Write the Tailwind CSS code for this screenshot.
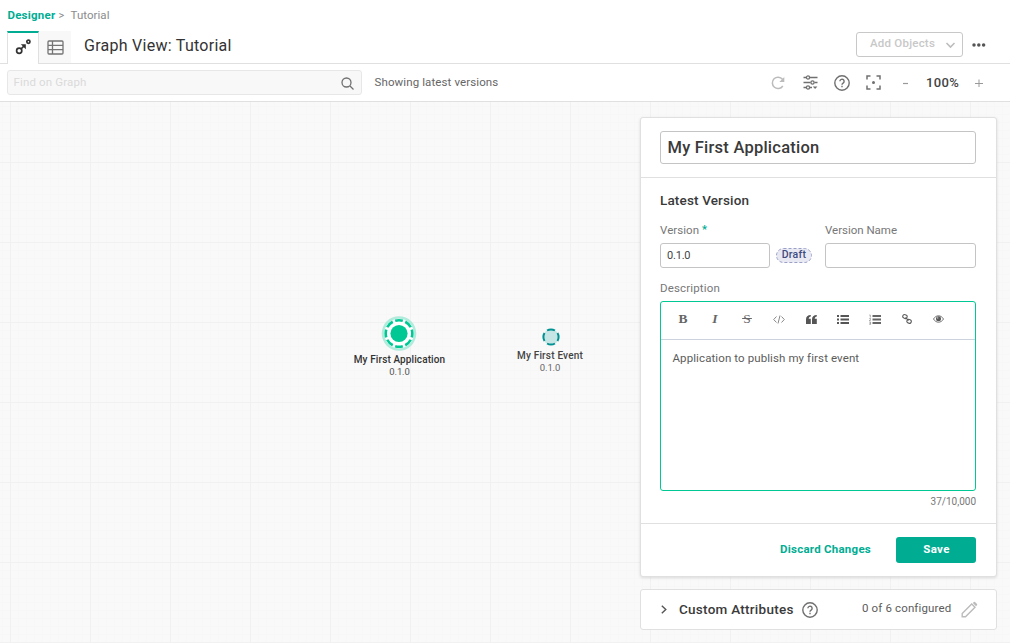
<!DOCTYPE html>
<html lang="en">
<head>
<meta charset="utf-8">
<title>Graph View: Tutorial</title>
<script src="https://cdn.jsdelivr.net/npm/@tailwindcss/browser@4"></script>
</head>
<body class="h-[643px] w-[1010px] overflow-hidden bg-white font-[Roboto,sans-serif] text-[11.5px] text-[#666] whitespace-nowrap">
<div class="flex h-full flex-col">
  <header class="flex h-16 shrink-0 flex-col border-b border-[#e0e0e0]">
    <nav class="flex h-[31px] items-center pl-[7.5px]">
      <a class="w-[51px] font-bold tracking-[0.22px] text-[#00ad93]">Designer</a>
      <span class="w-[12px] pt-px text-[11px] text-[#888]">&gt;</span>
      <span class="tracking-[0.05px] text-[#8c8c8c]">Tutorial</span>
    </nav>
    <div class="flex h-8 pl-[7px]">
      <div class="relative -mb-px flex h-[33px] w-8 items-center justify-center border-x border-t-2 border-x-[#e0e0e0] border-t-[#00ad93] bg-white">
        <svg class="mt-[-3px] size-4" viewBox="0 0 16 16" fill="none" stroke="#333" stroke-width="1.7"><circle cx="4.2" cy="11.8" r="2.6"/><circle cx="13.4" cy="2.800" r="1.6"/><path d="M6 10 9.500 6.500"/><path d="M5.800 5.300h5v5Z" fill="#333" stroke="none"/></svg>
      </div>
      <div class="flex w-8 items-center justify-center bg-[#f8f8f8]">
        <svg class="h-[15px] w-[17px]" viewBox="0 0 17 15" fill="none" stroke="#737373" stroke-width="1.3"><rect x="1" y="1" width="15" height="13" rx="1"/><path d="M1 5.300h15M1 9.700h15M5.500 1v13"/></svg>
      </div>
      <h1 class="ml-[13px] flex h-[30px] flex-1 items-center text-[16px] tracking-[0.27px] text-[#333]">Graph View: Tutorial</h1>
      <button class="mt-px flex h-[25px] w-[107px] items-center rounded-[3px] border border-[#c8c8c8] pl-[13px] font-medium text-[#c8c8c8]">
        <span class="-mt-0.5 w-[75px] text-left tracking-[0.22px]">Add Objects</span>
        <svg class="mt-0.5 h-[7px] w-[11px]" viewBox="0 0 11 7" fill="none" stroke="#bdbdbd" stroke-width="1.600"><path d="m1.500 1 4 4 4-4"/></svg>
      </button>
      <svg class="mt-3 mr-[24px] ml-[9px] h-1 w-[14px]" viewBox="0 0 14 4" fill="#555"><circle cx="2" cy="2" r="1.750"/><circle cx="6.800" cy="2" r="1.750"/><circle cx="11.600" cy="2" r="1.750"/></svg>
    </div>
  </header>

  <section class="flex h-[38px] shrink-0 items-center border-b border-[#e0e0e0] pl-[7px]">
    <div class="flex h-[25px] w-[355px] items-center justify-between rounded-[3px] border border-[#e7e7e7] bg-[#f8f8f8] pr-[7.5px] pl-[5.5px]">
      <span class="pt-px tracking-[0.14px] text-[#dadada]">Find on Graph</span>
      <svg class="mt-px size-[13px]" viewBox="0 0 13 13" fill="none" stroke="#707070" stroke-width="1.300"><circle cx="5.500" cy="5.500" r="4.500"/><path d="m9 9 3.500 3.500"/></svg>
    </div>
    <span class="ml-[12.5px] flex-1 tracking-[0.11px]">Showing latest versions</span>
    <svg class="mr-[18px] size-[14px]" viewBox="0 0 14 14" fill="none" stroke="#bbb" stroke-width="1.500"><path d="M11.800 10A5.700 5.700 0 1 1 11.500 3.300"/><path d="M13.300 1v5H8.300Z" fill="#bbb" stroke="none"/></svg>
    <svg class="mr-[16px] h-[15px] w-[15px]" viewBox="0 0 15 15" fill="none" stroke="#707070" stroke-width="1.300"><path d="M.5 2.500h3M7 2.500h7.500M.5 7.500h7M11.500 7.500h3M.5 12.500h3M7 12.500h2"/><circle cx="5" cy="2.500" r="1.600"/><circle cx="9.500" cy="7.500" r="1.600"/><circle cx="5" cy="12.500" r="1.600"/><path d="M9.800 11.500h4.600l-2.300 2.500Z" fill="#707070" stroke="none"/></svg>
    <svg class="mr-4 size-4" viewBox="0 0 16 16" fill="none" stroke="#707070" stroke-width="1.400"><circle cx="8" cy="8" r="7.200"/><path d="M5.900 6.300a2.100 2.100 0 1 1 3.200 1.800C8.300 8.600 8 8.900 8 9.700M8 10.800v1.500"/></svg>
    <svg class="mr-[22px] size-[15px]" viewBox="0 0 15 15" fill="none" stroke="#707070" stroke-width="1.500"><path d="M1 4.500V1h3.500M10.500 1H14v3.500M14 10.500V14h-3.500M4.500 14H1v-3.500"/><circle cx="7.500" cy="7.500" r="1.500" fill="#707070" stroke="none"/></svg>
    <svg class="mr-[18px] h-[7px] w-[5px]" viewBox="0 0 5 7" stroke="#999" stroke-width="1.2"><path d="M0 4.500h5"/></svg>
    <span class="w-[49px] text-[13px] font-medium tracking-[0.32px] text-[#444]">100%</span>
    <svg class="mr-[27px] size-[8px]" viewBox="0 0 8 8" stroke="#999" stroke-width="1"><path d="M0 4.500h8M4 .5v8"/></svg>
  </section>

  <main class="relative flex-1 overflow-hidden bg-[#f9f9f9]">
    <svg class="absolute inset-0 h-full w-full" shape-rendering="crispEdges">
      <defs>
        <pattern id="minor" x="2" y="4" width="8" height="8" patternUnits="userSpaceOnUse"><path d="M.5 0v8M0 .5h8" stroke="#f7f7f7"/></pattern>
        <pattern id="major" x="10" y="60" width="80" height="80" patternUnits="userSpaceOnUse"><path d="M.5 0v80M0 .5h80" stroke="#f1f1f1"/></pattern>
      </defs>
      <rect width="100%" height="100%" fill="url(#minor)"/><rect width="100%" height="100%" fill="url(#major)"/>
    </svg>

    <div class="absolute top-[213px] left-[349px] flex w-[101px] flex-col items-center">
      <svg class="mr-px size-[36px]" viewBox="0 0 36 36"><circle cx="18" cy="18.500" r="17.300" fill="#b0ebdc"/><circle cx="18" cy="18.500" r="14.700" fill="#fff"/><circle cx="18" cy="18.500" r="13.300" fill="none" stroke="#00c895" stroke-width="2.600" pathLength="80" stroke-dasharray="7.500 2.500" stroke-dashoffset="3.750"/><circle cx="18" cy="18.500" r="8.600" fill="#00c895"/></svg>
      <span class="mt-[2px] text-[10px] leading-[14px] font-medium tracking-[0.11px] text-[#333]">My First Application</span>
      <span class="text-[9.500px] leading-[10px] tracking-[-0.15px] text-[#555]">0.1.0</span>
    </div>
    <div class="absolute top-[226px] left-[505px] flex w-[90px] flex-col items-center">
      <svg class="ml-px size-[18px]" viewBox="0 0 18 18"><circle cx="9" cy="9" r="7.800" fill="#c6e6e6"/><circle cx="9" cy="9" r="7.600" fill="none" stroke="#009193" stroke-width="2" pathLength="80" stroke-dasharray="14 6" stroke-dashoffset="7"/></svg>
      <span class="mt-[3px] text-[10px] leading-[14px] font-medium tracking-[0.19px] text-[#444]">My First Event</span>
      <span class="text-[9.500px] leading-[10px] tracking-[-0.15px] text-[#666]">0.1.0</span>
    </div>

    <aside class="absolute top-[15px] left-[640px] flex w-[357px] flex-col gap-3">
      <div class="h-[460px] rounded-[3px] border border-[#e0e0e0] bg-white shadow-[0_1px_3px_rgba(0,0,0,0.12)]">
        <div class="h-[60px] border-b border-[#e0e0e0] px-[19px] pt-[13px]">
          <div class="flex h-[33px] w-[316px] items-center rounded-[3px] border border-[#c4c4c4] pt-0.5 pl-[6.500px] text-[16.500px] font-medium tracking-[0.23px] text-[#3a3a3a]">My First Application</div>
        </div>
        <div class="flex h-[346px] flex-col border-b border-[#e0e0e0] px-[19px] pt-[13px]">
          <h2 class="h-[30px] text-[13.500px] leading-[18px] font-medium tracking-[0.15px] text-[#3a3a3a]">Latest Version</h2>
          <div class="flex">
            <div class="w-[116px]">
              <div class="flex h-[22px] items-start leading-[18px] tracking-[0.05px] text-[#777]">Version<span class="ml-[3px] text-[11px] font-bold text-[#00ad93]">*</span></div>
              <div class="flex h-[25px] w-[110px] items-center rounded-[3px] border border-[#c4c4c4] pt-px text-[11px] tracking-[-0.2px] text-[#444]"><span class="pl-[6px]">0.1.0</span></div>
            </div>
            <div class="relative mt-[27px] mr-[13px] h-[15px] w-9 text-center text-[10.500px] leading-[14px] font-medium tracking-[0.3px] text-[#3f4a80]">
              <svg class="absolute inset-0 h-[15px] w-9" fill="#e8e9f3" stroke="#9aa0c8"><rect x=".5" y=".5" width="35" height="14" rx="7" stroke-dasharray="3 2"/></svg>
              <span class="relative">Draft</span>
            </div>
            <div>
              <div class="h-[22px] leading-[18px] tracking-[-0.02px] text-[#777]">Version Name</div>
              <div class="h-[25px] w-[151px] rounded-[3px] border border-[#c4c4c4]"></div>
            </div>
          </div>
          <div class="mt-[11px] h-[22px] leading-[18px] tracking-[0.16px] text-[#777]">Description</div>
          <div class="h-[190px] w-[316px] rounded-[3px] border border-[#00c895]">
            <div class="flex h-[38px] items-center border-b border-[#ccd3de] pb-[3px] pl-[6px] font-[Liberation_Serif,serif] text-[13.5px] text-[#666]">
              <span class="w-8 text-center font-bold">B</span>
              <span class="w-8 text-center font-bold italic">I</span>
              <span class="flex w-8 justify-center"><span class="w-3 text-center line-through">&#8202;S&#8202;</span></span>
              <span class="flex w-8 justify-center"><svg class="h-[9px] w-3" viewBox="0 0 12 9" fill="none" stroke="#888"><path d="M3.500 1.500.7 4.500l2.800 3M8.500 1.500l2.800 3-2.800 3M7 .5l-2 8"/></svg></span>
              <span class="flex w-8 justify-center"><svg class="h-[9px] w-[11px]" viewBox="0 0 11 9" fill="#555"><path d="M4.800 0v1.400C3.500 1.500 2.700 2.300 2.700 3.800H4.800V9H0V4.500C0 1.700 1.700 0 4.800 0ZM10.800 0v1.400C9.500 1.500 8.700 2.300 8.700 3.800H10.800V9H6V4.500C6 1.700 7.700 0 10.800 0Z"/></svg></span>
              <span class="flex w-8 justify-center"><svg class="h-[9px] w-3" viewBox="0 0 12 9" fill="#555"><path d="M0 0h2v2H0zM0 3.500h2v2H0zM0 7h2v2H0zM3.500 0H12v2H3.500zM3.500 3.500H12v2H3.500zM3.500 7H12v2H3.500z"/></svg></span>
              <span class="flex w-8 justify-center"><svg class="h-[11px] w-3" viewBox="0 0 12 11"><path d="M3.500 1H12v2H3.500zM3.500 4.500H12v2H3.500zM3.500 8H12v2H3.500z" fill="#666"/><path d="M.3 1h1v2.500M.3 4.500h1.200v1L.3 6.500h1.400M.3 8h1.300v2.400H.3M.3 9.200h1.300" fill="none" stroke="#888" stroke-width=".7"/></svg></span>
              <span class="flex w-8 justify-center"><svg class="size-[10px]" viewBox="0 0 10 10" fill="none" stroke="#5c5c5c" stroke-width="1.100"><rect x=".6" y=".8" width="4.400" height="3.600" rx="1.700" transform="rotate(20 3 3)"/><rect x="5" y="5.500" width="4.400" height="3.600" rx="1.700" transform="rotate(20 7 7)"/><path d="m3.500 3.500 3 3"/></svg></span>
              <span class="flex w-8 justify-center pr-px"><svg class="h-2 w-[11px]" viewBox="0 0 11 8"><path d="M.5 4C3-.3 8-.3 10.500 4 8 8.300 3 8.300.5 4Z" fill="none" stroke="#666" stroke-width=".9"/><circle cx="5.500" cy="3.700" r="2.500" fill="#555"/><circle cx="4.700" cy="2.900" r=".7" fill="#ddd"/></svg></span>
            </div>
            <p class="pt-[9px] pl-[11.500px] leading-[18px] tracking-[0.1px] text-[#5c5c5c]">Application to publish my first event</p>
          </div>
          <div class="mt-[3px] pr-px text-right text-[10px] leading-[16px] text-[#777]">37/10,000</div>
        </div>
        <div class="flex h-[52px] items-center justify-end pr-5 font-bold">
          <a class="mr-[25px] tracking-[0.25px] text-[#00ad93]">Discard Changes</a>
          <button class="h-[26px] w-20 rounded-[3px] bg-[#00ad93] pl-px tracking-[0.3px] text-white">Save</button>
        </div>
      </div>
      <div class="flex h-[41px] items-center rounded-[3px] border border-[#e0e0e0] bg-white pl-5">
        <svg class="mr-[12px] h-[9px] w-[6px]" viewBox="0 0 6 9" fill="none" stroke="#555" stroke-width="1.400"><path d="m.8.700 4 3.800-4 3.800"/></svg>
        <span class="w-[122.5px] text-[13.500px] font-medium tracking-[0.26px] text-[#3a3a3a]">Custom Attributes</span>
        <svg class="mr-[44.5px] size-4" viewBox="0 0 16 16" fill="none" stroke="#707070" stroke-width="1.400"><circle cx="8" cy="8" r="7.200"/><path d="M5.900 6.300a2.100 2.100 0 1 1 3.200 1.800C8.300 8.600 8 8.900 8 9.700M8 10.800v1.500"/></svg>
        <span class="-mt-0.5 w-[98.5px] tracking-[0.14px] text-[#5c5c5c]">0 of 6 configured</span>
        <svg class="-mt-px size-[17px]" viewBox="0 0 17 17" fill="none" stroke="#bbb" stroke-width="1.400"><path d="M1.200 15.800v-3.300L10.700 3l3.300 3.300L4.500 15.800Z"/><path d="m11.800 2 1-1q.6-.5 1.200 0L16 3q.5.600 0 1.200l-1 1Z" fill="#bbb" stroke="none"/></svg>
      </div>
    </aside>
  </main>
</div>
</body>
</html>
